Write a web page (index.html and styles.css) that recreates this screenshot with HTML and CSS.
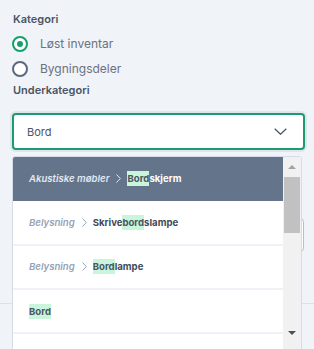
FILE: index.html
```html
<!DOCTYPE html>
<html lang="no">
<head>
<meta charset="utf-8">
<title>Kategori</title>
<link rel="stylesheet" href="styles.css">
</head>
<body>
<div class="page">
  <div class="label">Kategori</div>
  <div class="radio checked"><span class="dot"></span><span>Løst inventar</span></div>
  <div class="radio"><span class="dot"></span><span>Bygningsdeler</span></div>
  <div class="label label-sub">Underkategori</div>
  <div class="select-wrap">
    <div class="select">
      <span>Bord</span>
      <svg class="chev" width="13" height="7" viewBox="0 0 13 7"><polyline points="0.7,0.7 6.5,6.2 12.3,0.7" fill="none" stroke="#4b5563" stroke-width="1.3"/></svg>
    </div>
    <div class="menu">
      <div class="list">
        <div class="opt active">
          <span class="cat">Akustiske møbler</span>
          <svg class="sep" width="5" height="9" viewBox="0 0 5 9"><polyline points="0.5,0.5 4.3,4.5 0.5,8.5" fill="none" stroke="currentColor" stroke-width="1"/></svg>
          <span class="name"><mark>Bord</mark>skjerm</span>
        </div>
        <div class="opt">
          <span class="cat">Belysning</span>
          <svg class="sep" width="5" height="9" viewBox="0 0 5 9"><polyline points="0.5,0.5 4.3,4.5 0.5,8.5" fill="none" stroke="currentColor" stroke-width="1"/></svg>
          <span class="name">Skrive<mark>bord</mark>slampe</span>
        </div>
        <div class="opt">
          <span class="cat">Belysning</span>
          <svg class="sep" width="5" height="9" viewBox="0 0 5 9"><polyline points="0.5,0.5 4.3,4.5 0.5,8.5" fill="none" stroke="currentColor" stroke-width="1"/></svg>
          <span class="name"><mark>Bord</mark>lampe</span>
        </div>
        <div class="opt">
          <span class="name"><mark>Bord</mark></span>
        </div>
        <div class="opt"></div>
      </div>
      <div class="scrollbar">
        <div class="arrow up"></div>
        <div class="thumb"></div>
        <div class="fill"></div>
        <div class="arrow down"></div>
      </div>
    </div>
  </div>
  <div class="field"></div>
</div>
<div class="divider"></div>
</body>
</html>
```
FILE: styles.css
```css
* { box-sizing: border-box; }
html, body { margin: 0; padding: 0; }
body {
  background: #f0f3f8;
  font-family: Inter, "Noto Sans", sans-serif;
  width: 314px;
  height: 349px;
  overflow: hidden;
}
.page {
  padding: 12px 9px 0 12px;
}
.label {
  font-size: 11px;
  line-height: 14px;
  font-weight: 600;
  color: #4b5563;
  padding-left: 1px;
}
.label-sub {
  margin-top: 2px;
}
.radio {
  display: flex;
  align-items: center;
  height: 25px;
  font-size: 12px;
  color: #6b7280;
  gap: 12px;
}
.label + .radio { margin-top: 5px; }
.dot {
  width: 16px;
  height: 16px;
  border-radius: 50%;
  border: 2px solid #5b6880;
  background: #fff;
  display: flex;
  align-items: center;
  justify-content: center;
}
.radio.checked .dot {
  border-color: #16a06c;
}
.radio.checked .dot::after {
  content: "";
  width: 6px;
  height: 6px;
  border-radius: 50%;
  background: #16a06c;
}
.select-wrap {
  position: relative;
  margin-top: 16px;
}
.select {
  height: 37px;
  border: 2px solid #1c9c6d;
  border-radius: 4px;
  background: #fff;
  box-shadow: 0 0 0 2px #dfe5ee;
  display: flex;
  align-items: center;
  justify-content: space-between;
  padding: 0 16px 0 13px;
  font-size: 11px;
  color: #4b5563;
}
.chev { display: block; }
.menu {
  position: absolute;
  top: 43px;
  left: 0;
  width: 290px;
  height: 200px;
  border: 1px solid #d5dce7;
  border-radius: 3px 3px 0 0;
  background: #fff;
  display: flex;
  overflow: hidden;
  z-index: 2;
}
.list {
  flex: 1;
  display: flex;
  flex-direction: column;
}
.opt {
  flex: 0 0 auto;
  height: 44.3px;
  display: flex;
  align-items: center;
  padding-left: 16px;
  border-bottom: 2px solid #eef1f6;
  font-size: 9.6px;
  color: #94a3b8;
}
.opt.active {
  background: #64748b;
  border-bottom: 1px solid #64748b;
  color: #e2e8f0;
}
.cat {
  font-style: italic;
  font-weight: 600;
}
.sep {
  margin: 0 6px 0 7px;
  display: block;
}
.name {
  font-weight: 700;
  color: #3f4a5a;
}
.opt.active .name { color: #ffffff; }
mark {
  background: #c8f5dc;
  color: #4b5563;
  padding: 2px 0;
}
.scrollbar {
  width: 18px;
  background: #f1f1f1;
  display: flex;
  flex-direction: column;
  align-items: center;
}
.arrow {
  width: 0;
  height: 0;
  border-left: 4.5px solid transparent;
  border-right: 4.5px solid transparent;
}
.arrow.up {
  margin-top: 8px;
  border-bottom: 4px solid #a3a3a3;
}
.arrow.down {
  margin-bottom: 20px;
  border-top: 4px solid #505050;
}
.thumb {
  margin-top: 8px;
  width: 16px;
  height: 56px;
  background: #c1c1c1;
}
.fill { flex: 1; }
.field {
  margin-top: 68px;
  height: 34px;
  border: 1px solid #b4bfcd;
  border-radius: 4px;
  background: #fff;
  margin-right: 1px;
}
.divider {
  margin-top: 51px;
  height: 1px;
  background: #dde2ea;
}
```
